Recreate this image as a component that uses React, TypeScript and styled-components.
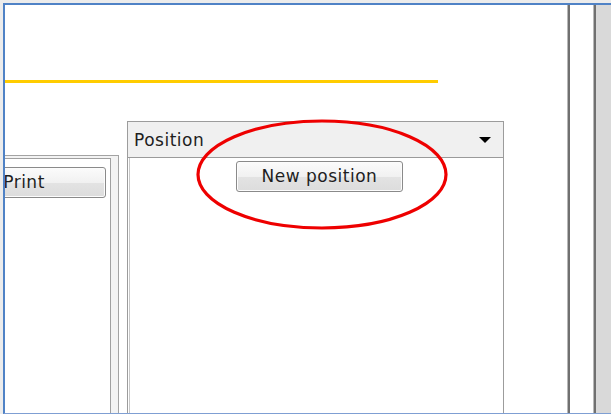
import styled, { createGlobalStyle } from 'styled-components'

const GlobalStyle = createGlobalStyle`
    html, body {
        margin: 0;
        padding: 0;
        width: 611px;
        height: 414px;
        overflow: hidden;
        background: #ececec;
        font-family: "DejaVu Sans", "Liberation Sans", sans-serif;
    }
`

const Frame = styled.div`
    position: relative;
    display: flex;
    margin: 3px 0 0 3px;
    width: 640px;
    height: 408px;
    border-top: 2px solid #4f82c6;
    border-left: 2px solid #4f82c6;
    border-bottom: 1px solid #7f9fd3;
    background: #fff;
`

const Main = styled.div`
    display: flex;
    flex-direction: column;
    width: 563px;
    flex-shrink: 0;
    overflow: hidden;
`

const Accent = styled.div`
    flex-shrink: 0;
    margin-top: 75px;
    width: 433px;
    height: 3px;
    background: #ffcc00;
`

const PanelRow = styled.div`
    display: flex;
    align-items: flex-start;
    gap: 8px;
    margin-top: 38px;
    flex-shrink: 0;
`

const GroupBox = styled.div`
    flex-shrink: 0;
    margin-top: 34px;
    margin-left: -86px;
    width: 200px;
    height: 400px;
    box-sizing: border-box;
    padding: 2px 7px 0 0;
    border: 1px solid #a3a3a3;
    background: #f3f3f3;
`

const GroupInner = styled.div`
    display: flex;
    flex-direction: column;
    align-items: flex-end;
    height: 100%;
    box-sizing: border-box;
    padding: 8px 4px;
    border: 1px solid #a0a0a0;
    background: #fff;
`

const Button = styled.button<{ $width: number }>`
    flex-shrink: 0;
    width: ${p => p.$width}px;
    height: 31px;
    padding: 0;
    border: 1px solid #8a8a8a;
    border-radius: 3px;
    background: linear-gradient(#fbfbfb, #f1f1f1 50%, #e3e3e3 51%, #dcdcdc);
    color: #1e1e1e;
    font-family: "DejaVu Sans", "Liberation Sans", sans-serif;
    font-size: 17px;
    letter-spacing: 0.5px;
    line-height: 29px;
    box-shadow: inset 0 0 0 1px #fcfcfc;
`

const Panel = styled.div`
    flex-shrink: 0;
    display: flex;
    flex-direction: column;
    width: 377px;
    height: 400px;
    box-sizing: border-box;
    border: 1px solid #9c9c9c;
`

const PanelHeader = styled.div`
    display: flex;
    align-items: center;
    justify-content: space-between;
    height: 35px;
    padding: 0 12px 0 6px;
    background: #f0f0f0;
    border-bottom: 1px solid #9a9a9a;
    color: #1e1e1e;
    font-size: 17px;
    letter-spacing: 0.5px;
`

const Caret = styled.span`
    width: 0;
    height: 0;
    border-left: 6px solid transparent;
    border-right: 6px solid transparent;
    border-top: 6px solid #000;
`

const PanelBody = styled.div`
    display: flex;
    justify-content: center;
    align-items: flex-start;
    flex: 1;
    padding: 3px 0 0 6px;
    border-left: 1px solid #c8c8c8;
    margin-left: 1px;
`

const Divider = styled.div`
    flex-shrink: 0;
    width: 2px;
    background: #707070;
    box-shadow: -1px 0 0 #b8b8b8, 1px 0 0 #c4c4c4;
`

const Gutter = styled.div`
    flex-shrink: 0;
    width: 24px;
    background: #fff;
`

const SideStrip = styled.div`
    flex: 1;
    background: #d9d9d9;
`

const Highlight = styled.svg`
    position: absolute;
    left: -1px;
    top: -1px;
    pointer-events: none;
`

export default function App() {
    return (
        <>
            <GlobalStyle />
            <Frame>
                <Main>
                    <Accent />
                    <PanelRow>
                        <GroupBox>
                            <GroupInner>
                                <Button $width={164}>Print</Button>
                            </GroupInner>
                        </GroupBox>
                        <Panel>
                            <PanelHeader>
                                <span>Position</span>
                                <Caret />
                            </PanelHeader>
                            <PanelBody>
                                <Button $width={167}>New position</Button>
                            </PanelBody>
                        </Panel>
                    </PanelRow>
                </Main>
                <Divider />
                <Gutter />
                <Divider />
                <SideStrip />
                {/* red ring around the new-position button */}
                <Highlight width="611" height="414">
                    <ellipse cx="318" cy="170.5" rx="124" ry="53.5" fill="none" stroke="#ee0000" strokeWidth="3.2" />
                </Highlight>
            </Frame>
        </>
    )
}
